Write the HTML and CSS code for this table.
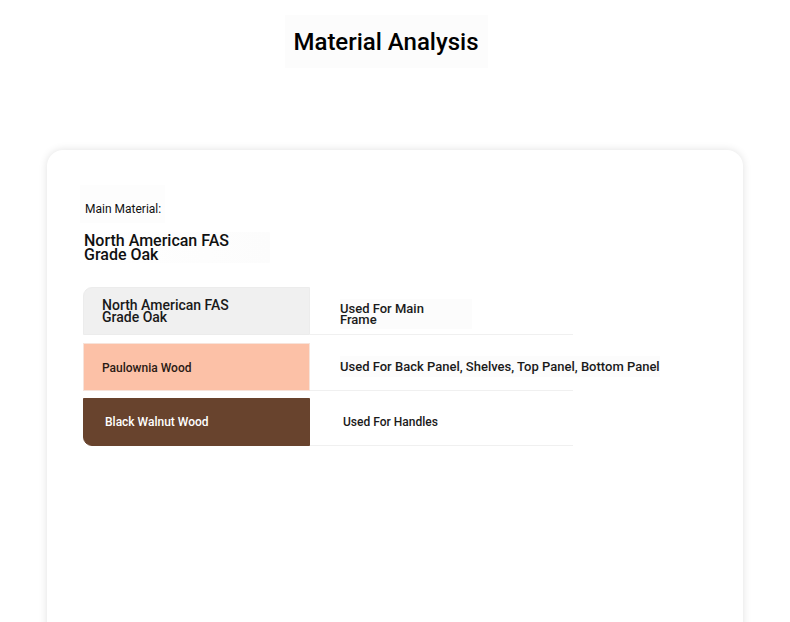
FILE: index.html
```html
<!DOCTYPE html>
<html>
<head>
<meta charset="utf-8">
<link rel="stylesheet" href="styles.css">
</head>
<body>
<header class="header">
  <h1 class="title">Material Analysis</h1>
</header>
<section class="card">
  <div class="main">
    <div class="main-label">Main Material:</div>
    <div class="main-name">North American FAS<br>Grade Oak</div>
  </div>
  <div class="table">
    <div class="row">
      <div class="swatch oak"><span class="oak-text">North American FAS<br>Grade Oak</span></div>
      <div class="use"><span class="use-text two">Used For Main<br>Frame</span></div>
    </div>
    <div class="row row-mid">
      <div class="swatch paulownia">Paulownia Wood</div>
      <div class="use"><span class="use-text wide">Used For Back Panel, Shelves, Top Panel, Bottom Panel</span></div>
    </div>
    <div class="row">
      <div class="swatch walnut">Black Walnut Wood</div>
      <div class="use use-indent"><span class="use-text">Used For Handles</span></div>
    </div>
  </div>
</section>
</body>
</html>
```
FILE: styles.css
```css
* { box-sizing: border-box; }
html, body { margin: 0; padding: 0; background: #fff; }
body {
  font-family: Roboto, "Noto Sans", sans-serif;
  color: #111;
  width: 790px;
  height: 622px;
  overflow: hidden;
}
.header {
  display: flex;
  justify-content: center;
  padding-top: 15px;
}
.title {
  margin: 0 0 0 -18px;
  width: 203px;
  height: 53px;
  background: #fcfcfc;
  font-size: 24px;
  font-weight: 500;
  line-height: 55px;
  text-align: center;
  color: #000;
}
.card {
  margin: 82px 0 0 47px;
  width: 696px;
  height: 520px;
  background: #fff;
  border-radius: 16px;
  box-shadow: 0 0 9px rgba(0, 0, 0, 0.12);
  padding: 35px 0 0 33px;
}
.main-label {
  display: inline-block;
  background: #fdfdfd;
  font-size: 12px;
  line-height: 14px;
  padding: 17px 4px 7px 5px;
  color: #111;
}
.main-name {
  margin-top: 9px;
  width: 190px;
  padding: 2px 4px 0 4px;
  background: linear-gradient(to right, #fff, #fcfcfc);
  font-size: 16px;
  font-weight: 500;
  line-height: 14px;
  height: 31px;
}
.table {
  margin-top: 24px;
  margin-left: 3px;
  width: 490px;
  display: flex;
  flex-direction: column;
  gap: 7px;
}
.row {
  display: flex;
  height: 48px;
}
.row-mid { margin-top: 1px; }
.swatch {
  flex: 0 0 227px;
  display: flex;
  align-items: center;
  padding-left: 18px;
  font-size: 12px;
  font-weight: 500;
  border: 1px solid #ececec;
}
.oak {
  background: #f0f0f0;
  border-top-left-radius: 9px;
  align-items: flex-start;
  padding-top: 11px;
}
.oak-text {
  font-size: 14px;
  line-height: 12px;
  color: #1a1a1a;
}
.paulownia {
  background: #fcc1a7;
  border-color: #f7e3da;
  color: #2a1a14;
  padding-top: 2px;
}
.walnut {
  background: #68432d;
  border-color: #68432d;
  border-bottom-left-radius: 9px;
  color: #fff;
  padding-left: 21px;
}
.use {
  flex: 0 0 263px;
  min-width: 0;
  border-bottom: 1px solid #f0f0f0;
  display: flex;
  align-items: center;
  padding-left: 30px;
  font-size: 12px;
  font-weight: 500;
  white-space: nowrap;
  color: #1a1a1a;
}
.use-indent { padding-left: 33px; }
.use-text.wide {
  font-size: 13px;
  background: #fcfcfc;
  padding: 3px 0;
}
.use-text.two {
  font-size: 13px;
  line-height: 11px;
  background: #fcfcfc;
  padding: 4px 48px 4px 0;
  margin-top: 6px;
}
```
